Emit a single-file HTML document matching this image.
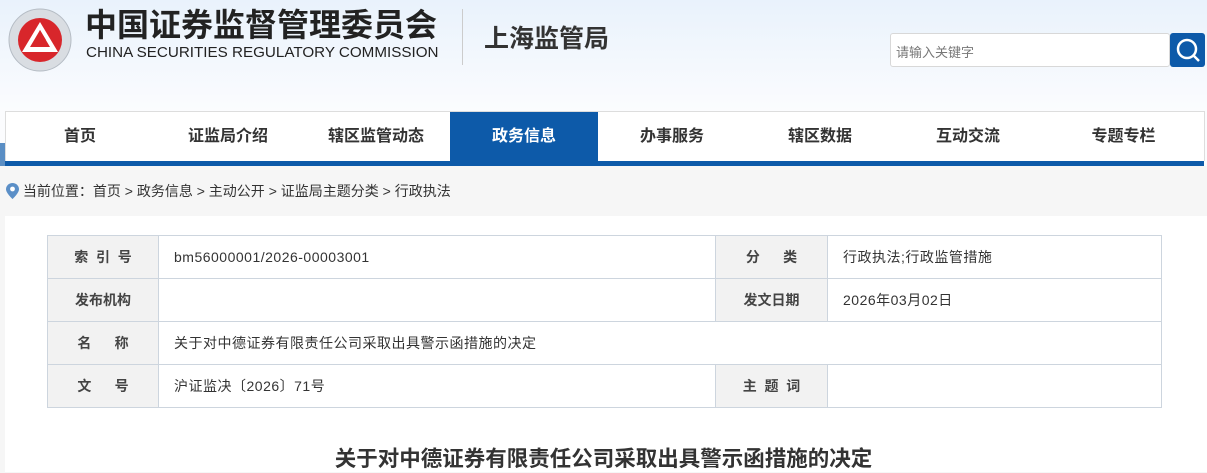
<!DOCTYPE html>
<html><head><meta charset="utf-8">
<style>
*{margin:0;padding:0;box-sizing:border-box}
body{width:1207px;height:472px;overflow:hidden;background:#f6f6f6;font-family:"Liberation Sans","Noto Sans CJK SC",sans-serif;position:relative}
.hdr{position:absolute;left:0;top:0;width:1207px;height:166px;background:linear-gradient(#e9f2fc,#fbfcfe 110px,#fbfcfe)}
.abs{position:absolute}
.cn{left:85px;top:8px;font-size:32px;line-height:34px;font-weight:bold;color:#222;white-space:nowrap}
.en{left:86px;top:44px;font-size:15.2px;line-height:17px;color:#222;white-space:nowrap}
.sep{left:462px;top:9px;width:1px;height:56px;background:#ccc}
.sh{left:484px;top:24px;font-size:25px;line-height:30px;font-weight:bold;color:#333}
.search{left:890px;top:33px;width:280px;height:34px;border:1px solid #d8d8d8;border-radius:3px;background:#fff;font-size:13px;color:#777;padding:8px 5px}
.sbtn{left:1170px;top:33px;width:35px;height:34px;background:#0d5aa9;border-radius:3px}
.nav{left:5px;top:111px;width:1200px;height:50px;background:#fff;border:1px solid #ddd;border-bottom:none}
.navbar{left:5px;top:161px;width:1199px;height:5px;background:#0d5aa9}
.lstrip{left:0;top:143px;width:5px;height:23px;background:#5a8ec4}
.nav div{position:absolute;top:0;height:50px;line-height:50px;font-size:16px;font-weight:bold;color:#333;text-align:center}
.nav .on{background:#0d5aa9;color:#fff}
.crumb{left:6px;top:181px;font-size:14px;color:#333;white-space:nowrap}
.panel{left:5px;top:216px;width:1202px;height:256px;background:#fff}
table{position:absolute;left:47px;top:235px;border-collapse:collapse;font-size:14px;color:#333}
td{border:1px solid #cdd5de;height:43px;padding:0}
td.l{background:#f2f2f2;font-weight:bold;text-align:center;color:#444;font-size:14px}
td.v{padding-left:15px;letter-spacing:0.5px}
.title{left:0;width:1207px;top:445px;text-align:center;font-size:21.5px;line-height:28px;font-weight:bold;color:#333}
</style></head><body>
<div class="hdr"></div>
<svg class="abs" style="left:8px;top:8px" width="64" height="64" viewBox="0 0 64 64">
<circle cx="32" cy="32" r="31" fill="#d9dde2" stroke="#b5bcc4"/>
<circle cx="32" cy="32" r="22" fill="#d8262b"/>
<path d="M32 14 L50 44 L14 44 Z M32 22 L22 39 L42 39 Z" fill="#fff" fill-rule="evenodd"/>
<path d="M32 22 L38 32 L28 32 Z" fill="#d8262b"/>
</svg>
<div class="abs cn">中国证券监督管理委员会</div>
<div class="abs en">CHINA SECURITIES REGULATORY COMMISSION</div>
<div class="abs sep"></div>
<div class="abs sh">上海监管局</div>
<div class="abs search">请输入关键字</div>
<div class="abs sbtn"><svg width="35" height="34"><circle cx="17" cy="16" r="9" fill="none" stroke="#fff" stroke-width="2.5"/><line x1="24" y1="23" x2="29" y2="28" stroke="#fff" stroke-width="2.5"/></svg></div>
<div class="abs lstrip"></div>
<div class="abs nav">
<div style="left:0;width:148px">首页</div>
<div style="left:148px;width:148px">证监局介绍</div>
<div style="left:296px;width:148px">辖区监管动态</div>
<div class="on" style="left:444px;width:148px">政务信息</div>
<div style="left:592px;width:148px">办事服务</div>
<div style="left:740px;width:148px">辖区数据</div>
<div style="left:888px;width:148px">互动交流</div>
<div style="left:1036px;width:163px">专题专栏</div>
</div>
<div class="abs navbar"></div>
<div class="abs crumb"><svg width="13" height="16" style="vertical-align:-3px" viewBox="0 0 13 16"><path d="M6.5 0C3 0 0 2.7 0 6.2 0 10 6.5 16 6.5 16S13 10 13 6.2C13 2.7 10 0 6.5 0Z" fill="#5b8fc7"/><circle cx="6.5" cy="6" r="2.4" fill="#fff"/></svg> 当前位置：首页 &gt; 政务信息 &gt; 主动公开 &gt; 证监局主题分类 &gt; 行政执法</div>
<div class="abs panel"></div>
<table>
<tr><td class="l" style="width:111px">索&nbsp;&nbsp;引&nbsp;&nbsp;号</td><td class="v" style="width:557px">bm56000001/2026-00003001</td><td class="l" style="width:112px">分&nbsp;&nbsp;&nbsp;&nbsp;&nbsp;&nbsp;类</td><td class="v" style="width:334px">行政执法;行政监管措施</td></tr>
<tr><td class="l">发布机构</td><td class="v"></td><td class="l">发文日期</td><td class="v">2026年03月02日</td></tr>
<tr><td class="l">名&nbsp;&nbsp;&nbsp;&nbsp;&nbsp;&nbsp;称</td><td class="v" colspan="3">关于对中德证券有限责任公司采取出具警示函措施的决定</td></tr>
<tr><td class="l">文&nbsp;&nbsp;&nbsp;&nbsp;&nbsp;&nbsp;号</td><td class="v">沪证监决〔2026〕71号</td><td class="l">主&nbsp;&nbsp;题&nbsp;&nbsp;词</td><td class="v"></td></tr>
</table>
<div class="abs title">关于对中德证券有限责任公司采取出具警示函措施的决定</div>
</body></html>
